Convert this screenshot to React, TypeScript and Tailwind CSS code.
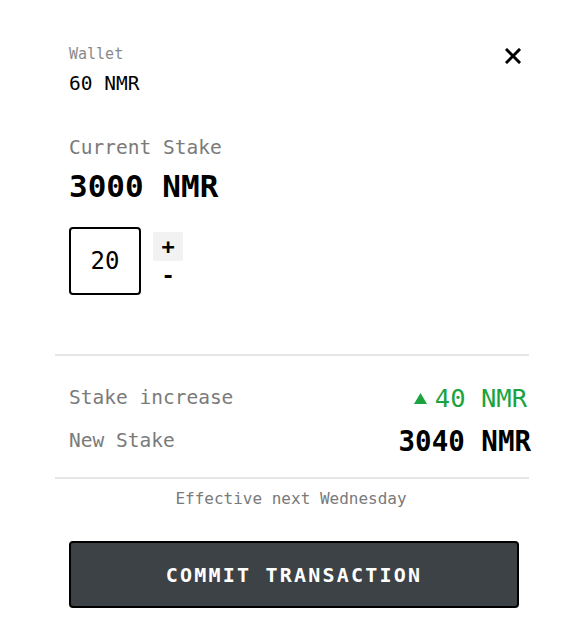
import React, { useState } from 'react';

const mono = "font-['DejaVu_Sans_Mono','Liberation_Mono',monospace]";

export default function App() {
  const [amount, setAmount] = useState(20);
  const current = 3000;
  const increase = amount * 2;

  return (
    <div className={`min-h-[643px] bg-white ${mono}`}>
      <div className="ml-[55px] w-[474px] pt-[44px]">
        <div className="flex justify-between pl-[14px] pr-[6px]">
          <div>
            <div className="text-[15px] leading-[20px] text-[#8a8a8a]">Wallet</div>
            <div className="mt-[8px] text-[19.5px] leading-[24px] text-black">60 NMR</div>
          </div>
          <button className="mt-[2px] h-[20px] w-[20px] flex items-center justify-center">
            <svg width="16" height="16" viewBox="0 0 16 16">
              <path d="M2 2 L14 14 M14 2 L2 14" stroke="#000" strokeWidth="3" strokeLinecap="square" />
            </svg>
          </button>
        </div>

        <div className="pl-[14px] mt-[40px]">
          <div className="text-[19.5px] leading-[24px] text-[#7a7a7a]">Current Stake</div>
          <div className="mt-[8px] text-[31px] leading-[36px] font-semibold text-black">{current} NMR</div>

          <div className="mt-[23px] flex items-start gap-[12px]">
            <div className="w-[72px] h-[68px] border-2 border-black rounded-[4px] flex items-center justify-center text-[24px]">
              {amount}
            </div>
            <div className="mt-[5px] flex flex-col items-start">
              <button
                onClick={() => setAmount(amount + 1)}
                className="w-[30px] h-[29px] bg-[#f2f2f2] text-[22px] font-bold leading-none flex items-center justify-center"
              >
                +
              </button>
              <button
                onClick={() => setAmount(Math.max(0, amount - 1))}
                className="w-[30px] h-[29px] text-[22px] font-bold leading-none flex items-center justify-center"
              >
                -
              </button>
            </div>
          </div>
        </div>

        <div className="mt-[59px] border-t-2 border-[#e6e6e6]" />

        <div className="pl-[14px] pt-[27px] pb-[20px]">
          <div className="flex items-center justify-between">
            <span className="text-[19.5px] leading-[24px] text-[#7a7a7a]">Stake increase</span>
            <span className="flex items-center gap-[8px] text-[25.5px] leading-[30px] text-[#1aa33e] pr-[2px]">
              <svg width="13" height="11" viewBox="0 0 13 11">
                <path d="M6.5 0 L13 11 L0 11 Z" fill="#1aa33e" />
              </svg>
              {increase} NMR
            </span>
          </div>
          <div className="mt-[12px] flex items-center justify-between">
            <span className="text-[19.5px] leading-[24px] text-[#7a7a7a]">New Stake</span>
            <span className="text-[27.5px] leading-[32px] font-semibold text-black -mr-[2px]">
              {current + increase} NMR
            </span>
          </div>
        </div>

        <div className="border-t-2 border-[#e6e6e6]" />

        <div className="pt-[10px] text-center text-[16px] leading-[20px] text-[#7a7a7a] pr-[2px]">
          Effective next Wednesday
        </div>

        <div className="pl-[14px] pr-[10px] mt-[32px]">
          <button className="w-full h-[67px] bg-[#3c4245] border-2 border-black rounded-[4px] text-white text-[20px] font-bold tracking-[0.11em]">
            COMMIT TRANSACTION
          </button>
        </div>
      </div>
    </div>
  );
}
